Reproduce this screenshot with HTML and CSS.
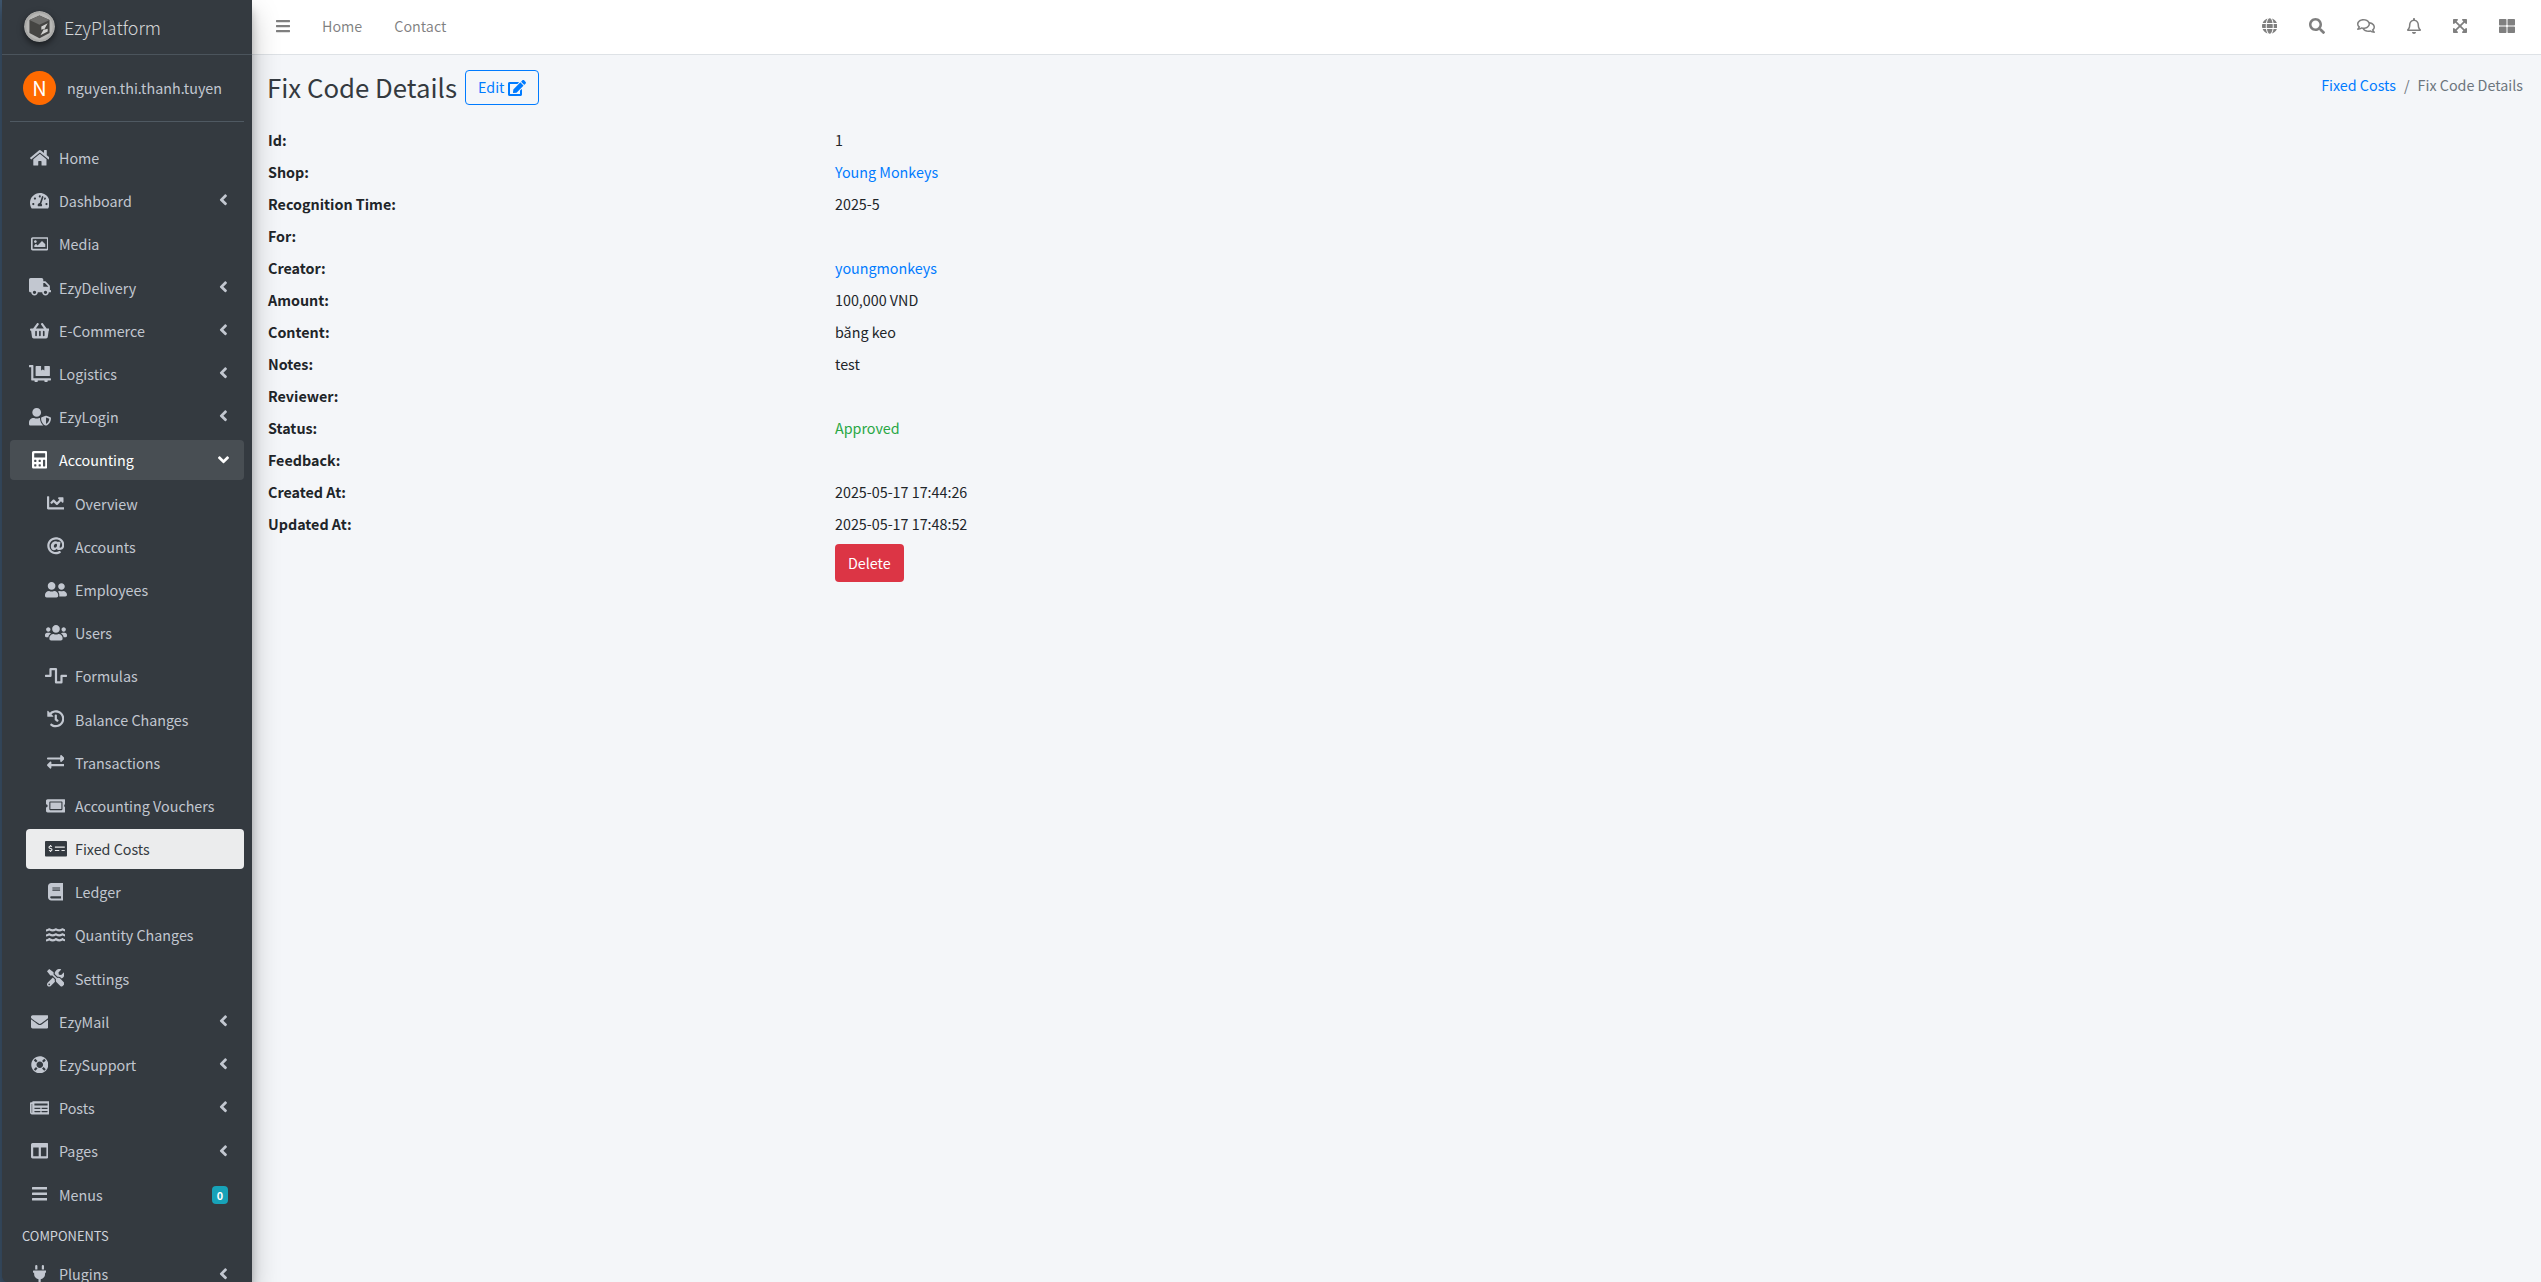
FILE: index.html
```html
<!DOCTYPE html>
<html lang="en">
<head>
    <meta charset="UTF-8">
    <meta name="viewport" content="width=device-width, initial-scale=1.0">
    <title>Fix Code Details</title>
    <link rel="stylesheet" href="styles.css">
</head>
<body>
    <svg class="defs" aria-hidden="true">
        <symbol id="angle-left" viewBox="0 0 256 512"><path d="M31.7 239l136-136c9.4-9.4 24.6-9.4 33.9 0l22.6 22.6c9.4 9.4 9.4 24.6 0 33.9L127.9 256l96.4 96.4c9.4 9.4 9.4 24.6 0 33.9L201.7 409c-9.4 9.4-24.6 9.4-33.9 0l-136-136c-9.5-9.4-9.5-24.6-.1-34z"/></symbol>
    </svg>
    <div class="wrapper">
        <aside class="sidebar">
            <a class="brand" href="#">
                <svg class="brand-logo" viewBox="0 0 34 34">
                    <circle cx="17" cy="17" r="17" fill="#a9a9a7"/>
                    <circle cx="17" cy="17" r="14.5" fill="#b8b8b6"/>
                    <path d="M17 5l11 5v14l-11 6-11-6V10z" fill="#454543"/>
                    <path d="M17 5l11 5-11 5-11-5z" fill="#6d6d6b"/>
                    <path d="M19 17l7-3.500-4 7 4-1v3l-8 4 4-7-3 1z" fill="#d0d0ce"/>
                </svg>
                <span class="brand-text">EzyPlatform</span>
            </a>
            <div class="user-panel">
                <span class="avatar">N</span>
                <a class="user-name" href="#">nguyen.thi.thanh.tuyen</a>
            </div>
            <nav>
                <ul class="nav-list">
                    <li><a class="nav-link" href="#"><span class="nav-icon"><svg viewBox="0 0 576 512"><path d="M280.37 148.26L96 300.11V464a16 16 0 0 0 16 16l112.06-.29a16 16 0 0 0 15.92-16V368a16 16 0 0 1 16-16h64a16 16 0 0 1 16 16v95.64a16 16 0 0 0 16 16.05L464 480a16 16 0 0 0 16-16V300L295.67 148.26a12.19 12.19 0 0 0-15.3 0zM571.6 251.47L488 182.56V44.05a12 12 0 0 0-12-12h-56a12 12 0 0 0-12 12v72.61L318.47 43a48 48 0 0 0-61 0L4.34 251.47a12 12 0 0 0-1.6 16.9l25.5 31A12 12 0 0 0 45.15 301l235.22-193.74a12.19 12.19 0 0 1 15.3 0L530.9 301a12 12 0 0 0 16.9-1.6l25.5-31a12 12 0 0 0-1.7-16.93z"/></svg></span>Home</a></li>
                    <li><a class="nav-link" href="#"><span class="nav-icon"><svg viewBox="0 0 576 512"><path d="M288 32C128.94 32 0 160.94 0 320c0 52.8 14.25 102.26 39.06 144.8 5.61 9.62 16.3 15.2 27.44 15.2h443c11.14 0 21.83-5.58 27.44-15.2C561.75 422.26 576 372.8 576 320c0-159.06-128.94-288-288-288zm0 64c14.71 0 26.58 10.13 30.32 23.65-1.11 2.26-2.64 4.23-3.45 6.67l-9.22 27.67c-5.13 3.49-10.97 6.01-17.64 6.01-17.67 0-32-14.33-32-32S270.33 96 288 96zM96 384c-17.67 0-32-14.33-32-32s14.33-32 32-32 32 14.33 32 32-14.33 32-32 32zm48-160c-17.67 0-32-14.33-32-32s14.33-32 32-32 32 14.33 32 32-14.33 32-32 32zm246.77-72.41l-61.33 184C343.13 347.33 352 364.54 352 384c0 11.72-3.38 22.55-8.88 32H232.88c-5.5-9.45-8.88-20.28-8.88-32 0-33.94 26.5-61.43 59.9-63.59l61.34-184.01c4.17-12.56 17.73-19.45 30.36-15.17 12.57 4.19 19.35 17.79 15.17 30.36zm14.66 57.2l15.52-46.55c3.47-1.29 7.13-2.23 11.05-2.23 17.67 0 32 14.33 32 32s-14.33 32-32 32c-11.38-.01-20.89-6.28-26.57-15.22zM480 384c-17.67 0-32-14.33-32-32s14.33-32 32-32 32 14.33 32 32-14.33 32-32 32z"/></svg></span>Dashboard<svg class="caret"><use href="#angle-left"/></svg></a></li>
                    <li><a class="nav-link" href="#"><span class="nav-icon"><svg viewBox="0 0 512 512"><path d="M464 64H48C21.49 64 0 85.49 0 112v288c0 26.51 21.49 48 48 48h416c26.51 0 48-21.49 48-48V112c0-26.51-21.49-48-48-48zm-6 336H54a6 6 0 0 1-6-6V118a6 6 0 0 1 6-6h404a6 6 0 0 1 6 6v276a6 6 0 0 1-6 6zM128 152c-22.091 0-40 17.909-40 40s17.909 40 40 40 40-17.909 40-40-17.909-40-40-40zM96 352h320v-80l-87.515-87.515c-4.686-4.686-12.284-4.686-16.971 0L192 304l-39.515-39.515c-4.686-4.686-12.284-4.686-16.971 0L96 304v48z"/></svg></span>Media</a></li>
                    <li><a class="nav-link" href="#"><span class="nav-icon"><svg viewBox="0 0 640 512"><path d="M624 352h-16V243.9c0-12.7-5.1-24.9-14.1-33.9L494 110.1c-9-9-21.2-14.1-33.9-14.1H416V48c0-26.5-21.5-48-48-48H48C21.5 0 0 21.5 0 48v320c0 26.5 21.5 48 48 48h16c0 53 43 96 96 96s96-43 96-96h128c0 53 43 96 96 96s96-43 96-96h48c8.8 0 16-7.2 16-16v-32c0-8.8-7.2-16-16-16zM160 464c-26.5 0-48-21.5-48-48s21.5-48 48-48 48 21.5 48 48-21.5 48-48 48zm320 0c-26.5 0-48-21.5-48-48s21.5-48 48-48 48 21.5 48 48-21.5 48-48 48zm80-208H416V144h44.1l99.9 99.9V256z"/></svg></span>EzyDelivery<svg class="caret"><use href="#angle-left"/></svg></a></li>
                    <li><a class="nav-link" href="#"><span class="nav-icon"><svg viewBox="0 0 576 512"><path d="M576 216v16c0 13.255-10.745 24-24 24h-8l-26.113 182.788C514.509 462.435 494.257 480 470.37 480H105.63c-23.887 0-44.139-17.565-47.518-41.212L32 256h-8c-13.255 0-24-10.745-24-24v-16c0-13.255 10.745-24 24-24h67.341l106.78-146.821c10.395-14.292 30.407-17.453 44.701-7.058 14.293 10.395 17.453 30.408 7.058 44.701L170.477 192h235.046L326.12 82.821c-10.395-14.292-7.234-34.306 7.059-44.701 14.291-10.395 34.306-7.235 44.701 7.058L484.659 192H552c13.255 0 24 10.745 24 24zM312 392V280c0-13.255-10.745-24-24-24s-24 10.745-24 24v112c0 13.255 10.745 24 24 24s24-10.745 24-24zm112 0V280c0-13.255-10.745-24-24-24s-24 10.745-24 24v112c0 13.255 10.745 24 24 24s24-10.745 24-24zm-224 0V280c0-13.255-10.745-24-24-24s-24 10.745-24 24v112c0 13.255 10.745 24 24 24s24-10.745 24-24z"/></svg></span>E-Commerce<svg class="caret"><use href="#angle-left"/></svg></a></li>
                    <li><a class="nav-link" href="#"><span class="nav-icon"><svg viewBox="0 0 640 512"><path d="M208 320h384c8.8 0 16-7.2 16-16V48c0-8.8-7.2-16-16-16H448v128l-48-32-48 32V32H208c-8.8 0-16 7.2-16 16v256c0 8.8 7.2 16 16 16zm416 64H128V16c0-8.8-7.2-16-16-16H16C7.2 0 0 7.2 0 16v32c0 8.8 7.2 16 16 16h48v368c0 8.8 7.2 16 16 16h82.9c-1.8 5-2.9 10.4-2.9 16 0 26.5 21.5 48 48 48s48-21.5 48-48c0-5.6-1.2-11-2.9-16H451c-1.8 5-2.9 10.4-2.9 16 0 26.5 21.5 48 48 48s48-21.5 48-48c0-5.6-1.2-11-2.9-16H624c8.8 0 16-7.2 16-16v-32c0-8.8-7.2-16-16-16z"/></svg></span>Logistics<svg class="caret"><use href="#angle-left"/></svg></a></li>
                    <li><a class="nav-link" href="#"><span class="nav-icon"><svg viewBox="0 0 640 512"><path d="M622.3 271.1l-115.2-45c-4.1-1.6-12.6-3.7-22.2 0l-115.2 45c-10.7 4.2-17.7 14-17.7 24.9 0 111.6 68.7 188.8 132.9 213.9 9.6 3.7 18 1.6 22.2 0C558.4 489.9 640 420.5 640 296c0-10.9-7-20.7-17.7-24.9zM496 462.4V273.3l95.5 37.3c-5.6 87.1-60.9 135.4-95.5 151.8zM224 256c70.7 0 128-57.3 128-128S294.7 0 224 0 96 57.3 96 128s57.3 128 128 128zm96 40c0-2.5.8-4.8 1.1-7.2-2.5-.1-4.9-.8-7.5-.8h-16.7c-22.2 10.2-46.9 16-72.9 16s-50.6-5.8-72.9-16h-16.7C60.2 288 0 348.2 0 422.4V464c0 26.5 21.5 48 48 48h352c6.8 0 13.3-1.5 19.2-4-54-42.9-99.2-116.7-99.2-212z"/></svg></span>EzyLogin<svg class="caret"><use href="#angle-left"/></svg></a></li>
                    <li>
                        <a class="nav-link open" href="#"><span class="nav-icon"><svg viewBox="0 0 448 512"><path d="M400 0H48C22.4 0 0 22.4 0 48v416c0 25.6 22.4 48 48 48h352c25.6 0 48-22.4 48-48V48c0-25.6-22.4-48-48-48zM128 435.2c0 6.4-6.4 12.8-12.8 12.8H76.8c-6.4 0-12.8-6.4-12.8-12.8v-38.4c0-6.4 6.4-12.8 12.8-12.8h38.4c6.4 0 12.8 6.4 12.8 12.8v38.4zm0-128c0 6.4-6.4 12.8-12.8 12.8H76.8c-6.4 0-12.8-6.4-12.8-12.8v-38.4c0-6.4 6.4-12.8 12.8-12.8h38.4c6.4 0 12.8 6.4 12.8 12.8v38.4zm128 128c0 6.4-6.4 12.8-12.8 12.8h-38.4c-6.4 0-12.8-6.4-12.8-12.8v-38.4c0-6.4 6.4-12.8 12.8-12.8h38.4c6.4 0 12.8 6.4 12.8 12.8v38.4zm0-128c0 6.4-6.4 12.8-12.8 12.8h-38.4c-6.4 0-12.8-6.4-12.8-12.8v-38.4c0-6.4 6.4-12.8 12.8-12.8h38.4c6.4 0 12.8 6.4 12.8 12.8v38.4zm128 128c0 6.4-6.4 12.8-12.8 12.8h-38.4c-6.4 0-12.8-6.4-12.8-12.8V268.8c0-6.4 6.4-12.8 12.8-12.8h38.4c6.4 0 12.8 6.4 12.8 12.8v166.4zm0-256c0 6.4-6.4 12.8-12.8 12.8H76.8c-6.4 0-12.8-6.4-12.8-12.8V76.8C64 70.4 70.4 64 76.8 64h294.4c6.4 0 12.8 6.4 12.8 12.8v102.4z"/></svg></span>Accounting<svg class="caret caret-down" viewBox="0 0 320 512"><path d="M143 352.3L7 216.3c-9.4-9.4-9.4-24.6 0-33.9l22.6-22.6c9.4-9.4 24.6-9.4 33.9 0l96.4 96.4 96.4-96.4c9.4-9.4 24.6-9.4 33.9 0l22.6 22.6c9.4 9.4 9.4 24.6 0 33.9l-136 136c-9.2 9.4-24.4 9.4-33.8 0z"/></svg></a>
                        <ul class="sub-list">
                            <li><a class="nav-link" href="#"><span class="nav-icon"><svg viewBox="0 0 512 512"><path d="M496 384H64V80c0-8.84-7.16-16-16-16H16C7.16 64 0 71.16 0 80v336c0 17.67 14.33 32 32 32h464c8.84 0 16-7.16 16-16v-32c0-8.84-7.16-16-16-16zM464 96H345.94c-21.38 0-32.09 25.85-16.97 40.97l32.4 32.4L288 242.75l-73.37-73.37c-12.5-12.5-32.76-12.5-45.25 0l-68.69 68.69c-6.25 6.25-6.25 16.38 0 22.63l22.62 22.62c6.25 6.25 16.38 6.25 22.63 0L192 237.25l73.37 73.37c12.5 12.5 32.76 12.5 45.25 0l96-96 32.4 32.4c15.12 15.12 40.97 4.41 40.97-16.97V112c.01-8.84-7.15-16-16-16z"/></svg></span>Overview</a></li>
                            <li><a class="nav-link" href="#"><span class="nav-icon"><svg viewBox="0 0 512 512"><path d="M256 8C118.941 8 8 118.919 8 256c0 137.059 110.919 248 248 248 48.154 0 95.342-14.14 135.408-40.223 12.005-7.815 14.625-24.288 5.552-35.372l-10.177-12.433c-7.671-9.371-21.179-11.667-31.373-5.129C325.92 429.757 291.314 440 256 440c-101.458 0-184-82.542-184-184S154.542 72 256 72c100.139 0 184 57.619 184 160 0 38.786-21.093 79.742-58.17 83.693-17.349-.454-16.91-12.857-13.476-30.024l23.433-121.11C394.653 149.75 383.308 136 368.225 136h-44.981a13.518 13.518 0 0 0-13.432 11.993l-.01.092c-14.697-17.901-40.448-21.775-59.971-21.775-74.58 0-137.831 62.234-137.831 151.46 0 65.303 36.785 105.87 96 105.87 26.984 0 57.369-15.637 74.991-38.333 9.522 34.104 40.613 34.103 70.71 34.103C462.609 379.41 504 307.798 504 232 504 95.653 394.023 8 256 8zm-21.68 304.43c-22.249 0-36.07-15.623-36.07-40.771 0-44.993 30.779-72.729 58.63-72.729 22.292 0 35.601 15.241 35.601 40.77 0 45.061-33.875 72.73-58.161 72.73z"/></svg></span>Accounts</a></li>
                            <li><a class="nav-link" href="#"><span class="nav-icon"><svg viewBox="0 0 640 512"><path d="M192 256c61.9 0 112-50.1 112-112S253.9 32 192 32 80 82.1 80 144s50.1 112 112 112zm76.8 32h-8.3c-20.8 10-43.9 16-68.5 16s-47.6-6-68.5-16h-8.3C51.6 288 0 339.6 0 403.2V432c0 26.5 21.5 48 48 48h288c26.5 0 48-21.5 48-48v-28.8c0-63.6-51.6-115.2-115.2-115.2zM480 256c53 0 96-43 96-96s-43-96-96-96-96 43-96 96 43 96 96 96zm48 32h-3.8c-13.9 4.8-28.6 8-44.2 8s-30.3-3.2-44.2-8H432c-20.4 0-39.2 5.9-55.7 15.4 24.4 26.3 39.7 61.2 39.7 99.8v38.4c0 2.2-.5 4.3-.6 6.4H592c26.5 0 48-21.5 48-48 0-61.9-50.1-112-112-112z"/></svg></span>Employees</a></li>
                            <li><a class="nav-link" href="#"><span class="nav-icon"><svg viewBox="0 0 640 512"><path d="M96 224c35.3 0 64-28.7 64-64s-28.7-64-64-64-64 28.7-64 64 28.7 64 64 64zm448 0c35.3 0 64-28.7 64-64s-28.7-64-64-64-64 28.7-64 64 28.7 64 64 64zm32 32h-64c-17.6 0-33.5 7.1-45.1 18.6 40.3 22.1 68.9 62 75.1 109.4h66c17.7 0 32-14.3 32-32v-32c0-35.3-28.7-64-64-64zm-256 0c61.9 0 112-50.1 112-112S381.9 32 320 32 208 82.1 208 144s50.1 112 112 112zm76.8 32h-8.3c-20.8 10-43.9 16-68.5 16s-47.6-6-68.5-16h-8.3C179.6 288 128 339.6 128 403.2V432c0 26.5 21.5 48 48 48h288c26.5 0 48-21.5 48-48v-28.8c0-63.6-51.6-115.2-115.2-115.2zm-223.7-13.4C161.5 263.1 145.6 256 128 256H64c-35.3 0-64 28.7-64 64v32c0 17.7 14.3 32 32 32h65.9c6.3-47.4 34.9-87.3 75.2-109.4z"/></svg></span>Users</a></li>
                            <li><a class="nav-link" href="#"><span class="nav-icon"><svg viewBox="0 0 640 512"><path d="M476 480H324a36 36 0 0 1-36-36V96h-96v156a36 36 0 0 1-36 36H16a16 16 0 0 1-16-16v-32a16 16 0 0 1 16-16h112V68a36 36 0 0 1 36-36h152a36 36 0 0 1 36 36v348h96V260a36 36 0 0 1 36-36h140a16 16 0 0 1 16 16v32a16 16 0 0 1-16 16H512v156a36 36 0 0 1-36 36z"/></svg></span>Formulas</a></li>
                            <li><a class="nav-link" href="#"><span class="nav-icon"><svg viewBox="0 0 512 512"><path d="M504 255.531c.253 136.64-111.18 248.372-247.82 248.468-59.015.042-113.223-20.53-155.822-54.911-11.077-8.94-11.905-25.541-1.839-35.607l11.267-11.267c8.609-8.609 22.353-9.551 31.891-1.984C173.062 425.135 212.781 440 256 440c101.705 0 184-82.311 184-184 0-101.705-82.311-184-184-184-48.814 0-93.149 18.969-126.068 49.932l50.754 50.754c10.08 10.08 2.941 27.314-11.313 27.314H24c-8.837 0-16-7.163-16-16V38.627c0-14.254 17.234-21.393 27.314-11.314l49.372 49.372C129.209 34.136 189.552 8 256 8c136.81 0 247.747 110.78 248 247.531zm-180.912 78.784l9.823-12.63c8.138-10.463 6.253-25.542-4.21-33.679L288 256.349V152c0-13.255-10.745-24-24-24h-16c-13.255 0-24 10.745-24 24v135.651l65.409 50.874c10.463 8.137 25.541 6.253 33.679-4.21z"/></svg></span>Balance Changes</a></li>
                            <li><a class="nav-link" href="#"><span class="nav-icon"><svg viewBox="0 0 512 512"><path d="M0 168v-16c0-13.255 10.745-24 24-24h360V80c0-21.367 25.899-32.042 40.971-16.971l80 80c9.372 9.373 9.372 24.569 0 33.941l-80 80C409.956 271.982 384 261.456 384 240v-48H24c-13.255 0-24-10.745-24-24zm488 152H128v-48c0-21.314-25.862-32.08-40.971-16.971l-80 80c-9.372 9.373-9.372 24.569 0 33.941l80 80C102.057 463.997 128 453.437 128 432v-48h360c13.255 0 24-10.745 24-24v-16c0-13.255-10.745-24-24-24z"/></svg></span>Transactions</a></li>
                            <li><a class="nav-link" href="#"><span class="nav-icon"><svg viewBox="0 0 576 512"><path d="M128 160h320v192H128V160zm400 96c0 26.51 21.49 48 48 48v96c0 26.51-21.49 48-48 48H48c-26.51 0-48-21.49-48-48v-96c26.51 0 48-21.49 48-48s-21.49-48-48-48v-96c0-26.51 21.49-48 48-48h480c26.51 0 48 21.49 48 48v96c-26.51 0-48 21.49-48 48zm-48-104c0-13.255-10.745-24-24-24H120c-13.255 0-24 10.745-24 24v208c0 13.255 10.745 24 24 24h336c13.255 0 24-10.745 24-24V152z"/></svg></span>Accounting Vouchers</a></li>
                            <li><a class="nav-link active" href="#"><span class="nav-icon"><svg viewBox="0 0 640 512"><path d="M608 32H32C14.33 32 0 46.33 0 64v384c0 17.67 14.33 32 32 32h576c17.67 0 32-14.33 32-32V64c0-17.67-14.33-32-32-32zM176 327.88V344c0 4.42-3.58 8-8 8h-16c-4.42 0-8-3.58-8-8v-16.29c-11.29-.58-22.27-4.52-31.37-11.35-3.9-2.93-4.1-8.77-.57-12.14l11.75-11.21c2.77-2.64 6.89-2.76 10.13-.73 3.87 2.42 8.26 3.72 12.82 3.72h28.11c6.5 0 11.8-5.92 11.8-13.19 0-5.95-3.61-11.19-8.77-12.73l-45-13.5c-18.59-5.58-31.58-23.42-31.58-43.39 0-24.52 19.05-44.44 42.67-45.07V152c0-4.42 3.58-8 8-8h16c4.42 0 8 3.58 8 8v16.29c11.29.58 22.27 4.51 31.37 11.35 3.9 2.93 4.1 8.77.57 12.14l-11.75 11.21c-2.77 2.64-6.89 2.76-10.13.73-3.87-2.43-8.26-3.72-12.82-3.72h-28.11c-6.5 0-11.8 5.92-11.8 13.19 0 5.95 3.61 11.19 8.77 12.73l45 13.5c18.59 5.58 31.58 23.42 31.58 43.39 0 24.53-19.05 44.44-42.67 45.07zM416 312c0 4.42-3.58 8-8 8H296c-4.42 0-8-3.58-8-8v-16c0-4.42 3.58-8 8-8h112c4.42 0 8 3.58 8 8v16zm160 0c0 4.42-3.58 8-8 8h-80c-4.42 0-8-3.58-8-8v-16c0-4.42 3.58-8 8-8h80c4.42 0 8 3.58 8 8v16zm0-96c0 4.42-3.58 8-8 8H296c-4.42 0-8-3.58-8-8v-16c0-4.42 3.58-8 8-8h272c4.42 0 8 3.58 8 8v16z"/></svg></span>Fixed Costs</a></li>
                            <li><a class="nav-link" href="#"><span class="nav-icon"><svg viewBox="0 0 448 512"><path d="M448 360V24c0-13.3-10.7-24-24-24H96C43 0 0 43 0 96v320c0 53 43 96 96 96h328c13.3 0 24-10.7 24-24v-16c0-7.5-3.5-14.3-8.9-18.7-4.2-15.4-4.2-59.3 0-74.7 5.4-4.3 8.9-11.1 8.9-18.6zM128 134c0-3.3 2.7-6 6-6h212c3.3 0 6 2.7 6 6v20c0 3.3-2.7 6-6 6H134c-3.3 0-6-2.7-6-6v-20zm0 64c0-3.3 2.7-6 6-6h212c3.3 0 6 2.7 6 6v20c0 3.3-2.7 6-6 6H134c-3.3 0-6-2.7-6-6v-20zm253.4 250H96c-17.7 0-32-14.3-32-32 0-17.6 14.4-32 32-32h285.4c-1.9 17.1-1.9 46.9 0 64z"/></svg></span>Ledger</a></li>
                            <li><a class="nav-link" href="#"><span class="nav-icon"><svg viewBox="0 0 576 512"><path d="M562.1 383.9c-21.5-2.4-42.1-10.5-57.9-22.9-14.1-11.1-34.2-11.3-48.2 0-37.9 30.4-107.2 30.4-145.7-1.5-13.5-11.2-33-9.1-46.7 1.8-38 30.1-106.9 30-145.2-1.7-13.5-11.2-33.3-8.9-47.1 2-15.5 12.2-36 20.1-57.7 22.4-7.9.8-13.6 7.8-13.6 15.7v32.2c0 9.1 7.6 16.8 16.7 16 28.8-2.5 56.1-11.4 79.4-25.9 56.5 34.6 137 34.1 192 0 56.5 34.6 137 34.1 192 0 23.3 14.2 50.9 23.3 79.1 25.8 9.1.8 16.7-6.9 16.7-16v-31.6c.1-8-5.7-15.4-13.8-16.3zm0-144c-21.5-2.4-42.1-10.5-57.9-22.9-14.1-11.1-34.2-11.3-48.2 0-37.9 30.4-107.2 30.4-145.7-1.5-13.5-11.2-33-9.1-46.7 1.8-38 30.1-106.9 30-145.2-1.7-13.5-11.2-33.3-8.9-47.1 2-15.5 12.2-36 20.1-57.7 22.4-7.9.8-13.6 7.8-13.6 15.7v32.2c0 9.1 7.6 16.8 16.7 16 28.8-2.5 56.1-11.4 79.4-25.9 56.5 34.6 137 34.1 192 0 56.5 34.6 137 34.1 192 0 23.3 14.2 50.9 23.3 79.1 25.8 9.1.8 16.7-6.9 16.7-16v-31.6c.1-8-5.7-15.4-13.8-16.3zm0-144C540.6 93.4 520 85.4 504.2 73 490.1 61.9 470 61.7 456 73c-37.9 30.4-107.2 30.4-145.7-1.5-13.5-11.2-33-9.1-46.7 1.8-38 30.1-106.9 30-145.2-1.7-13.5-11.2-33.3-8.9-47.1 2-15.5 12.2-36 20.1-57.7 22.4-7.9.8-13.6 7.8-13.6 15.7v32.2c0 9.1 7.6 16.8 16.7 16 28.8-2.5 56.1-11.4 79.4-25.9 56.5 34.6 137 34.1 192 0 56.5 34.6 137 34.1 192 0 23.3 14.2 50.9 23.3 79.1 25.8 9.1.8 16.7-6.9 16.7-16v-31.6c.1-8-5.7-15.4-13.8-16.3z"/></svg></span>Quantity Changes</a></li>
                            <li><a class="nav-link" href="#"><span class="nav-icon"><svg viewBox="0 0 512 512"><path d="M501.1 395.7L384 278.6c-23.1-23.1-57.6-27.6-85.4-13.9L192 158.1V96L64 0 0 64l96 128h62.1l106.6 106.6c-13.6 27.8-9.2 62.3 13.9 85.4l117.1 117.1c14.6 14.6 38.2 14.6 52.7 0l52.7-52.7c14.5-14.6 14.5-38.2 0-52.7zM331.7 225c28.3 0 54.9 11 74.9 31l19.4 19.4c15.8-6.9 30.8-16.5 43.8-29.5 37.1-37.1 49.7-89.3 37.9-136.7-2.2-9-13.5-12.1-20.1-5.5l-74.4 74.4-67.9-11.3L334 98.9l74.4-74.4c6.6-6.6 3.4-17.9-5.7-20.2-47.4-11.7-99.6.9-136.6 37.9-28.5 28.5-41.9 66.1-41.2 103.6l82.1 82.1c8.1-1.9 16.5-2.9 24.7-2.9zm-103.9 82l-56.7-56.7L18.7 402.8c-25 25-25 65.5 0 90.5s65.5 25 90.5 0l123.6-123.6c-7.6-19.9-9.9-41.6-5-62.7zM64 472c-13.2 0-24-10.8-24-24 0-13.3 10.7-24 24-24s24 10.7 24 24c0 13.2-10.7 24-24 24z"/></svg></span>Settings</a></li>
                        </ul>
                    </li>
                    <li><a class="nav-link" href="#"><span class="nav-icon"><svg viewBox="0 0 512 512"><path d="M502.3 190.8c3.9-3.1 9.7-.2 9.7 4.7V400c0 26.5-21.5 48-48 48H48c-26.5 0-48-21.5-48-48V195.6c0-5 5.7-7.8 9.7-4.7 22.4 17.4 52.1 39.5 154.1 113.6 21.1 15.4 56.7 47.8 92.2 47.6 35.7.3 72-32.8 92.3-47.6 102-74.1 131.6-96.3 154-113.7zM256 320c23.2.4 56.6-29.2 73.4-41.4 132.7-96.3 142.8-104.7 173.4-128.7 5.8-4.5 9.2-11.5 9.2-18.9v-19c0-26.5-21.5-48-48-48H48C21.5 64 0 85.5 0 112v19c0 7.4 3.4 14.3 9.2 18.9 30.6 23.9 40.7 32.4 173.4 128.7 16.8 12.2 50.2 41.8 73.4 41.4z"/></svg></span>EzyMail<svg class="caret"><use href="#angle-left"/></svg></a></li>
                    <li><a class="nav-link" href="#"><span class="nav-icon"><svg viewBox="0 0 512 512"><path d="M256 8C119.033 8 8 119.033 8 256s111.033 248 248 248 248-111.033 248-248S392.967 8 256 8zm173.696 119.559l-63.399 63.399c-10.987-18.559-26.67-34.252-45.255-45.255l63.399-63.399a218.396 218.396 0 0 1 45.255 45.255zM256 352c-53.019 0-96-42.981-96-96s42.981-96 96-96 96 42.981 96 96-42.981 96-96 96zM127.559 82.304l63.399 63.399c-18.559 10.987-34.252 26.67-45.255 45.255l-63.399-63.399a218.372 218.372 0 0 1 45.255-45.255zM82.304 384.441l63.399-63.399c10.987 18.559 26.67 34.252 45.255 45.255l-63.399 63.399a218.396 218.396 0 0 1-45.255-45.255zm302.137 45.255l-63.399-63.399c18.559-10.987 34.252-26.67 45.255-45.255l63.399 63.399a218.403 218.403 0 0 1-45.255 45.255z"/></svg></span>EzySupport<svg class="caret"><use href="#angle-left"/></svg></a></li>
                    <li><a class="nav-link" href="#"><span class="nav-icon"><svg viewBox="0 0 576 512"><path d="M552 64H88c-13.255 0-24 10.745-24 24v8H24c-13.255 0-24 10.745-24 24v272c0 30.928 25.072 56 56 56h472c26.51 0 48-21.49 48-48V88c0-13.255-10.745-24-24-24zM56 400a8 8 0 0 1-8-8V144h16v248a8 8 0 0 1-8 8zm236-16H140c-6.627 0-12-5.373-12-12v-8c0-6.627 5.373-12 12-12h152c6.627 0 12 5.373 12 12v8c0 6.627-5.373 12-12 12zm208 0H348c-6.627 0-12-5.373-12-12v-8c0-6.627 5.373-12 12-12h152c6.627 0 12 5.373 12 12v8c0 6.627-5.373 12-12 12zm-208-96H140c-6.627 0-12-5.373-12-12v-8c0-6.627 5.373-12 12-12h152c6.627 0 12 5.373 12 12v8c0 6.627-5.373 12-12 12zm208 0H348c-6.627 0-12-5.373-12-12v-8c0-6.627 5.373-12 12-12h152c6.627 0 12 5.373 12 12v8c0 6.627-5.373 12-12 12zm0-96H140c-6.627 0-12-5.373-12-12v-40c0-6.627 5.373-12 12-12h360c6.627 0 12 5.373 12 12v40c0 6.627-5.373 12-12 12z"/></svg></span>Posts<svg class="caret"><use href="#angle-left"/></svg></a></li>
                    <li><a class="nav-link" href="#"><span class="nav-icon"><svg viewBox="0 0 512 512"><path d="M464 32H48C21.49 32 0 53.49 0 80v352c0 26.51 21.49 48 48 48h416c26.51 0 48-21.49 48-48V80c0-26.51-21.49-48-48-48zM224 416H64V160h160v256zm224 0H288V160h160v256z"/></svg></span>Pages<svg class="caret"><use href="#angle-left"/></svg></a></li>
                    <li><a class="nav-link" href="#"><span class="nav-icon"><svg viewBox="0 0 448 512"><path d="M16 132h416c8.837 0 16-7.163 16-16V76c0-8.837-7.163-16-16-16H16C7.163 60 0 67.163 0 76v40c0 8.837 7.163 16 16 16zm0 160h416c8.837 0 16-7.163 16-16v-40c0-8.837-7.163-16-16-16H16c-8.837 0-16 7.163-16 16v40c0 8.837 7.163 16 16 16zm0 160h416c8.837 0 16-7.163 16-16v-40c0-8.837-7.163-16-16-16H16c-8.837 0-16 7.163-16 16v40c0 8.837 7.163 16 16 16z"/></svg></span>Menus<span class="badge">0</span></a></li>
                    <li class="nav-header">COMPONENTS</li>
                    <li><a class="nav-link" href="#"><span class="nav-icon"><svg viewBox="0 0 384 512"><path d="M320,32a32,32,0,0,0-64,0v96h64Zm48,128H16A16,16,0,0,0,0,176v32a16,16,0,0,0,16,16H32v32A160.07,160.07,0,0,0,160,412.8V512h64V412.8A160.07,160.07,0,0,0,352,256V224h16a16,16,0,0,0,16-16V176A16,16,0,0,0,368,160ZM128,32a32,32,0,0,0-64,0v96h64Z"/></svg></span>Plugins<svg class="caret"><use href="#angle-left"/></svg></a></li>
                </ul>
            </nav>
        </aside>

        <div class="main">
            <header class="topbar">
                <a class="top-toggle" href="#"><svg class="top-icon" viewBox="0 0 448 512"><path d="M16 132h416c8.837 0 16-7.163 16-16V76c0-8.837-7.163-16-16-16H16C7.163 60 0 67.163 0 76v40c0 8.837 7.163 16 16 16zm0 160h416c8.837 0 16-7.163 16-16v-40c0-8.837-7.163-16-16-16H16c-8.837 0-16 7.163-16 16v40c0 8.837 7.163 16 16 16zm0 160h416c8.837 0 16-7.163 16-16v-40c0-8.837-7.163-16-16-16H16c-8.837 0-16 7.163-16 16v40c0 8.837 7.163 16 16 16z"/></svg></a>
                <a class="top-link" href="#">Home</a>
                <a class="top-link" href="#">Contact</a>
                <div class="top-actions">
                    <a href="#"><svg class="top-icon" viewBox="0 0 496 512"><path d="M336.5 160C322 70.7 287.8 8 248 8s-74 62.7-88.5 152h177zM152 256c0 22.2 1.2 43.5 3.3 64h185.3c2.1-20.5 3.3-41.8 3.3-64s-1.2-43.5-3.3-64H155.3c-2.1 20.5-3.3 41.8-3.3 64zm324.7-96c-28.6-67.9-86.5-120.4-158-141.6 24.4 33.8 41.2 84.7 50 141.6h108zM177.2 18.4C105.8 39.6 47.8 92.1 19.3 160h108c8.7-56.9 25.5-107.8 49.9-141.6zM487.4 192H372.7c2.1 21 3.3 42.5 3.3 64s-1.2 43-3.3 64h114.6c5.5-20.5 8.6-41.8 8.6-64s-3.1-43.5-8.5-64zM120 256c0-21.5 1.2-43 3.3-64H8.6C3.2 212.5 0 233.8 0 256s3.2 43.5 8.6 64h114.6c-2-21-3.2-42.5-3.2-64zm39.5 96c14.5 89.3 48.7 152 88.5 152s74-62.7 88.5-152h-177zm159.3 141.6c71.4-21.2 129.4-73.7 158-141.6h-108c-8.8 56.9-25.6 107.8-50 141.6zM19.3 352c28.6 67.9 86.5 120.4 158 141.6-24.4-33.8-41.2-84.7-50-141.6h-108z"/></svg></a>
                    <a href="#"><svg class="top-icon" viewBox="0 0 512 512"><path d="M505 442.7L405.3 343c-4.5-4.5-10.6-7-17-7H372c27.6-35.3 44-79.7 44-128C416 93.1 322.9 0 208 0S0 93.1 0 208s93.1 208 208 208c48.3 0 92.7-16.4 128-44v16.3c0 6.4 2.5 12.5 7 17l99.7 99.7c9.4 9.4 24.6 9.4 33.9 0l28.3-28.3c9.4-9.4 9.4-24.6.1-34zM208 336c-70.7 0-128-57.2-128-128 0-70.7 57.2-128 128-128 70.7 0 128 57.2 128 128 0 70.7-57.2 128-128 128z"/></svg></a>
                    <a href="#"><svg class="top-icon" viewBox="0 0 576 512"><path d="M532 386.2c27.5-27.1 44-61.1 44-98.2 0-80-76.5-146.1-176.2-157.9C368.3 72.5 294.3 32 208 32 93.1 32 0 103.6 0 192c0 37 16.5 71 44 98.2-15.3 30.7-37.3 54.5-37.7 54.9-6.3 6.7-8.1 16.5-4.4 25 3.6 8.5 12 14 21.2 14 53.5 0 96.7-20.2 125.2-38.8 9.2 2.1 18.7 3.7 28.4 4.9C208.1 407.6 281.8 448 368 448c20.8 0 40.8-2.4 59.8-6.8C456.3 459.7 499.4 480 553 480c9.2 0 17.5-5.5 21.2-14 3.6-8.5 1.9-18.3-4.4-25-.4-.3-22.5-24.1-37.8-54.8zm-392.8-92.3L122.1 305c-14.1 9.1-28.5 16.3-43.1 21.4 2.7-4.7 5.4-9.7 8-14.8l15.5-31.1L77.7 256C64.2 242.6 48 220.7 48 192c0-60.7 73.3-112 160-112s160 51.3 160 112-73.3 112-160 112c-16.5 0-33-1.9-49-5.6l-19.8-4.5zM498.3 352l-24.7 24.4 15.5 31.1c2.6 5.1 5.3 10.1 8 14.8-14.6-5.1-29-12.3-43.1-21.4l-17.1-11.1-19.9 4.6c-16 3.7-32.5 5.6-49 5.6-54 0-102.2-20.1-131.3-49.7C338 339.5 416 272.9 416 192c0-3.4-.4-6.7-.7-10C479.7 196.5 528 238.8 528 288c0 28.7-16.2 50.6-29.7 64z"/></svg></a>
                    <a href="#"><svg class="top-icon" viewBox="0 0 448 512"><path d="M439.39 362.29c-19.32-20.76-55.47-51.99-55.47-154.29 0-77.7-54.48-139.9-127.94-155.16V32c0-17.67-14.32-32-31.98-32s-31.98 14.33-31.98 32v20.84C118.56 68.1 64.08 130.3 64.08 208c0 102.3-36.15 133.53-55.47 154.29-6 6.45-8.66 14.16-8.61 21.71.11 16.4 12.98 32 32.1 32h383.8c19.12 0 32-15.6 32.1-32 .05-7.55-2.61-15.27-8.61-21.71zM67.53 368c21.22-27.97 44.42-74.33 44.53-159.42 0-.2-.06-.38-.06-.58 0-61.86 50.14-112 112-112s112 50.14 112 112c0 .2-.06.38-.06.58.11 85.1 23.31 131.46 44.53 159.42H67.53zM224 512c35.32 0 63.97-28.65 63.97-64H160.03c0 35.35 28.65 64 63.97 64z"/></svg></a>
                    <a href="#"><svg class="top-icon" viewBox="0 0 448 512"><path d="M448 344v112a23.94 23.94 0 0 1-24 24H312c-21.39 0-32.09-25.9-17-41l36.2-36.2L224 295.6 116.77 402.9 153 439c15.09 15.1 4.39 41-17 41H24a23.94 23.94 0 0 1-24-24V344c0-21.4 25.89-32.1 41-17l36.19 36.2L184.46 256 77.18 148.7 41 185c-15.1 15.1-41 4.4-41-17V56a23.94 23.94 0 0 1 24-24h112c21.39 0 32.09 25.9 17 41l-36.2 36.2L224 216.4l107.23-107.3L295 73c-15.09-15.1-4.39-41 17-41h112a23.94 23.94 0 0 1 24 24v112c0 21.4-25.89 32.1-41 17l-36.19-36.2L263.54 256l107.28 107.3L407 327.1c15.1-15.2 41-4.5 41 16.9z"/></svg></a>
                    <a href="#"><svg class="top-icon" viewBox="0 0 512 512"><path d="M296 32h192c13.255 0 24 10.745 24 24v160c0 13.255-10.745 24-24 24H296c-13.255 0-24-10.745-24-24V56c0-13.255 10.745-24 24-24zm-80 0H24C10.745 32 0 42.745 0 56v160c0 13.255 10.745 24 24 24h192c13.255 0 24-10.745 24-24V56c0-13.255-10.745-24-24-24zM0 296v160c0 13.255 10.745 24 24 24h192c13.255 0 24-10.745 24-24V296c0-13.255-10.745-24-24-24H24c-13.255 0-24 10.745-24 24zm296 184h192c13.255 0 24-10.745 24-24V296c0-13.255-10.745-24-24-24H296c-13.255 0-24 10.745-24 24v160c0 13.255 10.745 24 24 24z"/></svg></a>
                </div>
            </header>

            <main class="content">
                <div class="page-head">
                    <h1 class="page-title">Fix Code Details</h1>
                    <a class="btn btn-edit" href="#">Edit <svg class="btn-icon" viewBox="0 0 576 512"><path d="M402.6 83.2l90.2 90.2c3.8 3.8 3.8 10 0 13.8L274.4 405.6l-92.8 10.3c-12.4 1.4-22.9-9.1-21.5-21.5l10.3-92.8L388.8 83.2c3.8-3.8 10-3.8 13.8 0zm162-22.9l-48.8-48.8c-15.2-15.2-39.9-15.2-55.2 0l-35.4 35.4c-3.8 3.8-3.8 10 0 13.8l90.2 90.2c3.8 3.8 10 3.8 13.8 0l35.4-35.4c15.2-15.3 15.2-40 0-55.2zM384 346.2V448H64V128h229.8c3.2 0 6.2-1.3 8.5-3.5l40-40c7.6-7.6 2.2-20.5-8.5-20.5H48C21.5 64 0 85.5 0 112v352c0 26.5 21.5 48 48 48h352c26.5 0 48-21.5 48-48V306.2c0-10.7-12.9-16-20.5-8.5l-40 40c-2.2 2.3-3.5 5.3-3.5 8.5z"/></svg></a>
                    <ol class="breadcrumb">
                        <li><a href="#">Fixed Costs</a></li>
                        <li class="sep">/</li>
                        <li class="current">Fix Code Details</li>
                    </ol>
                </div>
                <div class="details">
                    <div class="label">Id:</div><div>1</div>
                    <div class="label">Shop:</div><div><a href="#">Young Monkeys</a></div>
                    <div class="label">Recognition Time:</div><div>2025-5</div>
                    <div class="label">For:</div><div></div>
                    <div class="label">Creator:</div><div><a href="#">youngmonkeys</a></div>
                    <div class="label">Amount:</div><div>100,000 VND</div>
                    <div class="label">Content:</div><div>băng keo</div>
                    <div class="label">Notes:</div><div>test</div>
                    <div class="label">Reviewer:</div><div></div>
                    <div class="label">Status:</div><div class="approved">Approved</div>
                    <div class="label">Feedback:</div><div></div>
                    <div class="label">Created At:</div><div>2025-05-17 17:44:26</div>
                    <div class="label">Updated At:</div><div>2025-05-17 17:48:52</div>
                    <div></div><div><button class="btn btn-delete">Delete</button></div>
                </div>
            </main>
        </div>
    </div>
</body>
</html>
```

FILE: styles.css
```css
* {
    box-sizing: border-box;
}
html, body {
    height: 100%;
}
body {
    margin: 0;
    overflow: hidden;
    background-color: #3f566e;
    color: #212529;
    font-family: 'Noto Sans CJK SC', 'Noto Sans', sans-serif;
    font-size: 14.32px;
    line-height: 24px;
}
a {
    color: #007bff;
    text-decoration: none;
}
ul, ol {
    list-style: none;
    margin: 0;
    padding: 0;
}
.defs {
    display: none;
}
.wrapper {
    display: flex;
    height: 1282px;
    margin-left: 2px;
}

/* sidebar */
.sidebar {
    flex: 0 0 250px;
    height: 1282px;
    overflow: hidden;
    background-color: #343a40;
    box-shadow: 0 14px 28px rgba(0, 0, 0, 0.25), 0 10px 10px rgba(0, 0, 0, 0.22);
    border-bottom-left-radius: 6px;
    position: relative;
    z-index: 2;
}
.brand {
    display: flex;
    align-items: center;
    height: 55px;
    padding-left: 22px;
    padding-bottom: 1px;
    border-bottom: 1px solid #4b545c;
    color: rgba(255, 255, 255, 0.8);
}
.brand-logo {
    width: 31px;
    height: 31px;
    margin-right: 9px;
    border-radius: 50%;
    box-shadow: 0 3px 6px rgba(0, 0, 0, 0.5);
}
.brand-text {
    font-size: 17.9px;
    font-weight: 300;
}
.user-panel {
    display: flex;
    align-items: center;
    height: 67px;
    margin: 0 8px;
    padding-left: 13px;
    border-bottom: 1px solid #4f5962;
}
.avatar {
    width: 33px;
    height: 34px;
    margin-right: 11px;
    border-radius: 50%;
    background-color: #ff6a00;
    color: #fff;
    font-size: 20px;
    line-height: 34px;
    text-align: center;
}
.user-name {
    color: #c2c7d0;
}
.nav-list {
    padding: 15.6px 8px 0;
}
.nav-link {
    display: flex;
    align-items: center;
    height: 40px;
    margin-bottom: 3.2px;
    padding: 1px 16px 0;
    border-radius: 4px;
    color: #c2c7d0;
}
.nav-link.open {
    background-color: rgba(255, 255, 255, 0.1);
    color: #fff;
}
.nav-link.active {
    background-color: #ebeced;
    color: #343a40;
}
.nav-icon {
    display: flex;
    justify-content: center;
    flex: 0 0 25.6px;
    margin: -1px 6.6px 0 0.8px;
}
.nav-icon svg {
    height: 17.6px;
    fill: currentColor;
}
.caret {
    width: 8.8px;
    height: 17.6px;
    margin-top: -2px;
    margin-left: auto;
    fill: currentColor;
}
.caret-down {
    width: 11px;
    margin-right: -1px;
}
.sub-list {
    padding-left: 16px;
}
.badge {
    width: 16px;
    height: 18px;
    margin-left: auto;
    border-radius: 4px;
    background-color: #17a2b8;
    color: #fff;
    font-size: 10.8px;
    font-weight: 700;
    line-height: 18px;
    text-align: center;
}
.nav-header {
    height: 36.6px;
    padding: 7px 12px 0;
    color: #d0d4db;
    font-size: 12.9px;
}

/* top bar */
.main {
    flex: 1;
    min-width: 0;
    background-color: #f4f6f9;
}
.topbar {
    display: flex;
    align-items: center;
    height: 55px;
    padding-right: 10px;
    padding-bottom: 2px;
    background-color: #fff;
    border-bottom: 1px solid #dee2e6;
}
.top-toggle {
    display: flex;
    margin-left: 24px;
    margin-right: 16px;
}
.top-icon {
    display: block;
    height: 16px;
    fill: rgba(0, 0, 0, 0.5);
}
.top-link {
    padding: 0 16px;
    color: rgba(0, 0, 0, 0.5);
}
.top-actions {
    display: flex;
    margin-left: auto;
}
.top-actions a {
    padding: 0 16px;
}

/* page */
.content {
    padding: 15px 18px 0 16px;
}
.page-head {
    display: flex;
    align-items: center;
    height: 35px;
    margin-bottom: 23px;
}
.page-title {
    margin: -3px 8px 0 -1px;
    color: #343a40;
    font-size: 25.8px;
    font-weight: 400;
    line-height: 35px;
}
.btn {
    display: inline-block;
    border: 1px solid transparent;
    border-radius: 4px;
    font-family: inherit;
    font-size: 14.32px;
    line-height: 24px;
}
.btn-edit {
    padding: 4px 12px 5px;
    border-color: #007bff;
    color: #007bff;
}
.btn-icon {
    height: 16px;
    vertical-align: -3px;
    fill: currentColor;
}
.btn-delete {
    height: 38px;
    padding: 0 12px;
    background-color: #dc3545;
    color: #fff;
}
.breadcrumb {
    display: flex;
    gap: 8px;
    margin-left: auto;
    margin-top: -6px;
}
.breadcrumb .sep, .breadcrumb .current {
    color: #6c757d;
}
.details {
    display: grid;
    grid-template-columns: 567px 1fr;
    grid-auto-rows: 24px;
    row-gap: 8px;
}
.label {
    font-weight: 700;
}
.approved {
    color: #28a745;
}
```
